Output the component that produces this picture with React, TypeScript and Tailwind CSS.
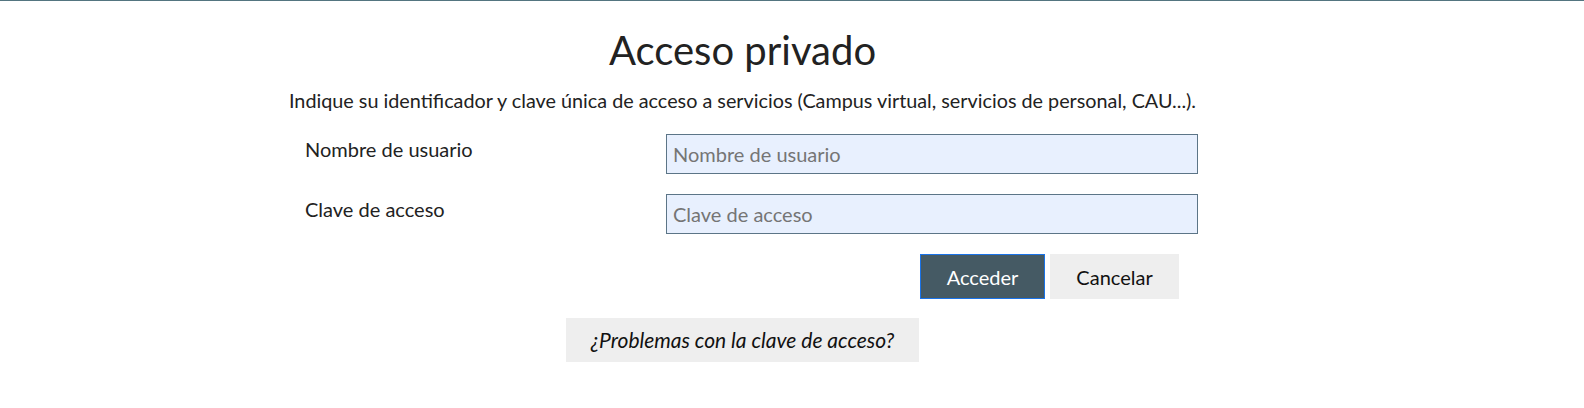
import { useState } from 'react';

// Login box: "Acceso privado"
function Field({ label, type, value, onChange }: { label: string; type: string; value: string; onChange: (v: string) => void }) {
  return (
    <div className="flex">
      <label className="w-[379px] pl-[18px] text-[20px] leading-[30px] text-[#222]">{label}</label>
      <input
        type={type}
        value={value}
        onChange={(e) => onChange(e.target.value)}
        placeholder={label}
        className="h-10 w-[532px] border border-[#5c7587] bg-[#e8f0fe] px-[6px] text-[20px] text-[#222] outline-none placeholder:text-[#757575]"
      />
    </div>
  );
}

export default function App() {
  const [user, setUser] = useState('');
  const [pass, setPass] = useState('');

  return (
    <main className="min-h-[408px] border-t border-[#537580] bg-white font-['Lato',sans-serif] text-[#222]">
      <div className="ml-[287px] flex w-[911px] flex-col items-center">
        <h1 className="mt-[25px] text-[40px] leading-[48px]">Acceso privado</h1>
        <p className="mt-[11px] whitespace-nowrap text-[19.8px] leading-[30px]">
          Indique su identificador y clave única de acceso a servicios (Campus virtual, servicios de personal, CAU...).
        </p>

        <form className="mt-[19px] flex w-full flex-col gap-5" onSubmit={(e) => e.preventDefault()}>
          <Field label="Nombre de usuario" type="text" value={user} onChange={setUser} />
          <Field label="Clave de acceso" type="password" value={pass} onChange={setPass} />

          <div className="flex justify-end gap-[5px] pr-[19px]">
            <button
              type="submit"
              className="h-[45px] w-[125px] border border-[#1a73e8] bg-[#455a64] text-[20px] text-white"
            >
              Acceder
            </button>
            <button
              type="button"
              onClick={() => { setUser(''); setPass(''); }}
              className="h-[45px] w-[129px] bg-[#eeeeee] text-[20px] text-[#111]"
            >
              Cancelar
            </button>
          </div>
        </form>

        <button type="button" className="mt-[19px] h-11 w-[353px] bg-[#eeeeee] text-[21px] italic text-[#111]">
          ¿Problemas con la clave de acceso?
        </button>
      </div>
    </main>
  );
}
